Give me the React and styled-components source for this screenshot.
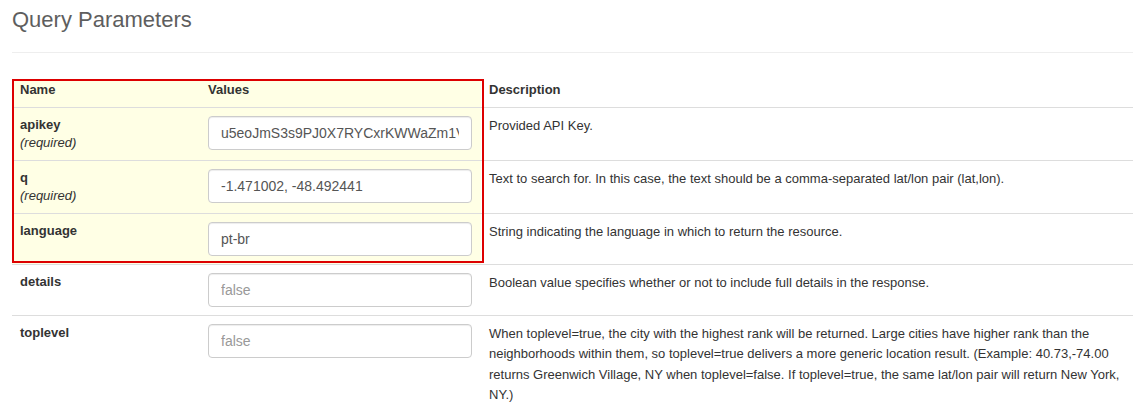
import React from 'react';
import styled, { createGlobalStyle } from 'styled-components';

const GlobalStyle = createGlobalStyle`
    * {
        box-sizing: border-box;
    }

    body {
        margin: 0;
        background: #fff;
        font-family: "Liberation Sans", Arial, sans-serif;
        font-size: 13px;
        line-height: 1.42857;
        color: #333;
    }
`;

const Page = styled.div`
    padding: 8px 0 0 12px;
`;

const PageHeader = styled.div`
    padding-bottom: 10px;
    border-bottom: 1px solid #eee;
    margin-bottom: 26px;
`;

const Title = styled.h3`
    margin: 0 0 10px;
    font-size: 22px;
    font-weight: normal;
    line-height: 1.1;
    color: #5e5e5e;
`;

const TableWrap = styled.div`
    position: relative;
`;

// red annotation frame drawn over the first rows
const Highlight = styled.div`
    position: absolute;
    left: 0;
    top: 0;
    width: 472px;
    height: 184px;
    border: 2px solid #d00;
    pointer-events: none;
`;

const Table = styled.table`
    width: 100%;
    table-layout: fixed;
    border-collapse: collapse;
    border-spacing: 0;
`;

const HeadCell = styled.th`
    padding: 2px 8px 7px;
    text-align: left;
    font-weight: bold;
    vertical-align: bottom;
    background: ${(props) => (props.$marked ? '#ffffe5' : 'transparent')};
`;

const Cell = styled.td`
    padding: 8px;
    vertical-align: top;
    line-height: 18px;
    border-top: 1px solid #ddd;
    background: ${(props) => (props.$marked ? '#ffffe5' : 'transparent')};
`;

const ParamName = styled.strong`
    display: block;
    font-weight: bold;
`;

const Required = styled.em`
    display: block;
    font-style: italic;
`;

const Input = styled.input`
    display: block;
    width: 264px;
    height: 34px;
    padding: 6px 12px;
    font-family: "Liberation Sans", Arial, sans-serif;
    font-size: 14px;
    color: #555;
    background: #fff;
    border: 1px solid #ccc;
    border-radius: 4px;
    box-shadow: inset 0 1px 1px rgba(0, 0, 0, 0.075);
    outline: none;

    &::placeholder {
        color: #999;
    }
`;

const Desc = styled.p`
    margin: 0;
    font-size: 13px;
    line-height: 20.5px;
    color: #333;
`;

const params = [
    {
        name: 'apikey',
        required: true,
        value: 'u5eoJmS3s9PJ0X7RYCxrKWWaZm1VWKhGp',
        desc: 'Provided API Key.',
        marked: true,
    },
    {
        name: 'q',
        required: true,
        value: '-1.471002, -48.492441',
        desc: 'Text to search for. In this case, the text should be a comma-separated lat/lon pair (lat,lon).',
        marked: true,
    },
    {
        name: 'language',
        value: 'pt-br',
        desc: 'String indicating the language in which to return the resource.',
        marked: true,
    },
    {
        name: 'details',
        placeholder: 'false',
        desc: 'Boolean value specifies whether or not to include full details in the response.',
    },
    {
        name: 'toplevel',
        placeholder: 'false',
        desc: 'When toplevel=true, the city with the highest rank will be returned. Large cities have higher rank than the neighborhoods within them, so toplevel=true delivers a more generic location result. (Example: 40.73,-74.00 returns Greenwich Village, NY when toplevel=false. If toplevel=true, the same lat/lon pair will return New York, NY.)',
    },
];

const App = () => {
    return (
        <Page>
            <GlobalStyle />
            <PageHeader>
                <Title>Query Parameters</Title>
            </PageHeader>
            <TableWrap>
                <Table>
                    <colgroup>
                        <col style={{ width: 188 }} />
                        <col style={{ width: 281 }} />
                        <col />
                    </colgroup>
                    <thead>
                        <tr>
                            <HeadCell $marked>Name</HeadCell>
                            <HeadCell $marked>Values</HeadCell>
                            <HeadCell>Description</HeadCell>
                        </tr>
                    </thead>
                    <tbody>
                        {params.map((p) => (
                            <tr key={p.name}>
                                <Cell $marked={p.marked}>
                                    <ParamName>{p.name}</ParamName>
                                    {p.required && <Required>(required)</Required>}
                                </Cell>
                                <Cell $marked={p.marked}>
                                    <Input
                                        type="text"
                                        defaultValue={p.value}
                                        placeholder={p.placeholder}
                                    />
                                </Cell>
                                <Cell>
                                    <Desc>{p.desc}</Desc>
                                </Cell>
                            </tr>
                        ))}
                    </tbody>
                </Table>
                <Highlight />
            </TableWrap>
        </Page>
    );
};

export default App;
